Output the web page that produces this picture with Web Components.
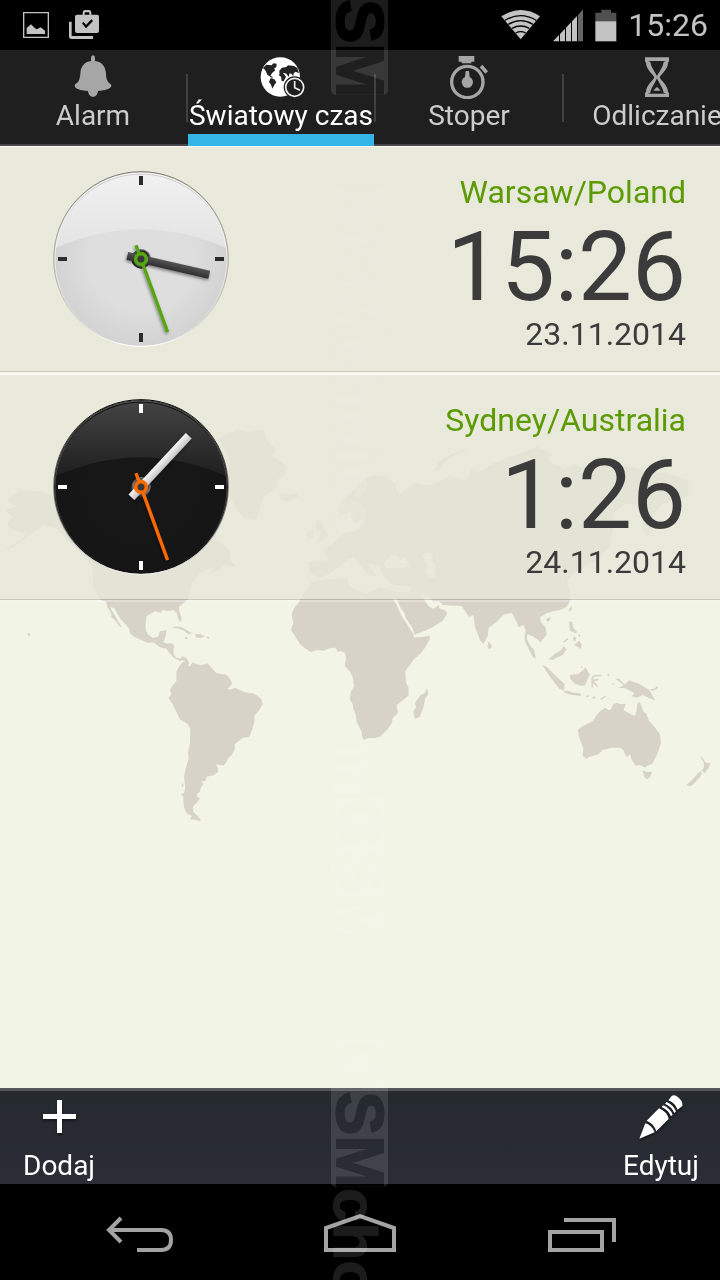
<!DOCTYPE html>
<html lang="pl">
<head>
<meta charset="utf-8">
<meta name="viewport" content="width=device-width, initial-scale=1">
<title>Światowy czas</title>
<style>
  html, body { margin: 0; background: #000; }
  body { font-family: Roboto, "Noto Sans", sans-serif; overflow-x: hidden; }
</style>
</head>
<body>
<world-clock-app></world-clock-app>

<script>
const define = (name, html) => {
  const template = document.createElement('template');
  template.innerHTML = html;
  customElements.define(name, class extends HTMLElement {
    constructor() {
      super();
      this.attachShadow({ mode: 'open' }).append(template.content.cloneNode(true));
    }
  });
};

/* System status bar */
define('status-bar', `
<style>
  :host { display: flex; align-items: center; justify-content: space-between; height: 50px; padding: 0 12px 0 23px; background: #000; color: #c3c3c3; box-sizing: border-box; }
  div { display: flex; align-items: center; }
  .left { gap: 20px; }
  .right { gap: 11px; }
  svg { display: block; fill: #c3c3c3; }
  time { font-size: 32px; line-height: 50px; }
</style>
<div class="left">
  <svg width="26" height="26" viewBox="69 36 78 78" aria-hidden="true"><path fill-rule="evenodd" d="M69 36h78v78H69zM73 40v70h70V40z"/><path d="M80 102V84l13-11 12 12 5 3 12-6 13 10v10z"/></svg>
  <svg width="30" height="30" viewBox="207 33 90 90" aria-hidden="true"><path fill-rule="evenodd" d="M231 47h17v-5q0-9 8-9h10q8 0 8 9v5h17q6 0 6 6v43q0 6-6 6h-60q-6 0-6-6V53q0-6 6-6zM254 47h14v-5q0-2-2-2h-10q-2 0-2 2zM246 73l12 15 21-22-5-5-16 17-7-9z"/><path d="M207 68h8v43h64v9h-64q-8 0-8-8z"/></svg>
</div>
<div class="right">
  <svg width="40" height="32" viewBox="420 26 120 96" aria-hidden="true"><path d="M421 48Q479 10 537 48L479 117z"/><g fill="none" stroke="#000" stroke-width="4"><path d="M432 60Q479 32 526 60M442 72Q479 50 516 72M453 84Q479 70 505 84M464 98Q479 90 494 98"/></g></svg>
  <svg width="32" height="34" viewBox="579 20 96 102" aria-hidden="true"><path d="M582 120l18-19v19zM603 98l15-16v38h-15zM621 79l15-16v57h-15zM639 60l15-16v76h-15z"/><path fill="#666" d="M657 41l15-17v96h-15z"/></svg>
  <svg width="22" height="34" viewBox="704 20 66 102" aria-hidden="true"><path fill="#505050" d="M705 34h18v-9h29v9h16v28h-63z"/><path d="M705 60h63v60h-63z"/></svg>
  <time>15:26</time>
</div>`);

/* One tab; the icon goes in the "icon" slot, the label in the default slot */
define('app-tab', `
<style>
  :host { display: block; flex: 0 0 188px; position: relative; color: #ccc; }
  button { display: flex; flex-direction: column; align-items: center; width: 186px; height: 96px; margin: 0; padding: 5px 0 0; border: 0; background: none; color: inherit; font: 28px/34px Roboto, "Noto Sans", sans-serif; white-space: nowrap; }
  .icon { display: flex; height: 44px; }
  :host::after { content: ""; position: absolute; right: 0; top: 24px; width: 2px; height: 48px; background: #404040; }
  :host(:last-child)::after { display: none; }
  :host([selected]) { color: #fff; }
  :host([selected])::before { content: ""; position: absolute; left: 0; right: 2px; bottom: 0; height: 12px; background: #33b5e5; }
</style>
<button type="button"><span class="icon"><slot name="icon"></slot></span><span><slot></slot></span></button>`);

define('tab-bar', `
<style>
  :host { display: block; height: 96px; background: linear-gradient(#48464b, #48464b) bottom / 100% 2px no-repeat, #1f1f1f; overflow: hidden; }
  nav { display: flex; }
  svg { display: block; fill: #a6a6a6; }
</style>
<nav aria-label="Widoki">
  <app-tab>
    <svg slot="icon" width="38" height="44" viewBox="222 165 114 132" aria-hidden="true"><path d="M273 183v-9q0-8 6-8t6 8v9c21 3 32 16 33 38 1 22 7 26 13 30q3 3 3 7c-2 9-18 13-40 15-2 23-28 23-30 0-24-2-38-6-40-15q0-4 3-7c7-4 12-8 14-30 1-22 12-35 32-38z"/></svg>Alarm</app-tab>
  <app-tab selected>
    <svg slot="icon" width="48" height="44" viewBox="21 15 144 132" aria-hidden="true">
      <circle cx="91" cy="81" r="59" fill="#fff"/>
      <g fill="#222"><path d="M39 54l10-10 16 2 5-6 10 1-1 10-7 5 4 5-9 7-6 9 9 5-5 1-13-9-6-13z"/><path d="M62 84l11 4 6 9-6 8-6 11-4-12-6-8z"/><path d="M88 62l8-9 13-2 5-5 18 2 10 6 5 16-10-5-6 5-1 9-6-8-5-1-3 11-7-10-8-3-3 9-10-7z"/><path d="M88 71l14 1 6 8-7 14-6-1-2-13-6-4z"/></g>
      <circle cx="134" cy="112" r="33" fill="#1f1f1f"/><circle cx="134" cy="112" r="27" fill="none" stroke="#eee" stroke-width="5"/><path d="M134 93v20l16 8" fill="none" stroke="#eee" stroke-width="5"/>
    </svg>Światowy czas</app-tab>
  <app-tab>
    <svg slot="icon" width="42" height="44" viewBox="262 165 126 132" aria-hidden="true"><path d="M294 168h47v17h-9v5h-29v-5h-9z"/><circle cx="320" cy="246" r="47" fill="none" stroke="#a6a6a6" stroke-width="10"/><path d="M315 213h10l2 18a17 17 0 1 1-14 0z"/><path d="M365 194l17 20-8 7-17-19z"/></svg>Stoper</app-tab>
  <app-tab>
    <svg slot="icon" width="26" height="44" viewBox="852 166 78 132" aria-hidden="true"><path fill-rule="evenodd" d="M855 173h72v12l-3 4c0 22-25 37-25 44s25 23 25 44l3 3v12h-72v-12l3-3c0-21 25-37 25-44s-25-22-25-44l-3-4zM866 184c3 27 25 37 25 49s-22 24-25 49h50c-3-25-25-37-25-49s22-22 25-49z"/><path fill="none" stroke="#a6a6a6" stroke-width="7" d="M867 186c3 26 20 35 20 47s-17 24-20 47M915 186c-3 26-20 35-20 47s17 24 20 47"/><path d="M881 271q4-1 6-6 4-5 8 0 2 5 6 6v2h-20z"/></svg>Odliczanie</app-tab>
</nav>`);

/* World map behind the list */
define('world-map', `
<style>
  :host { display: block; }
  svg { display: block; width: 100%; height: auto; fill: #d8d3c8; }
</style>
<svg viewBox="0 0 2160 1320" aria-hidden="true">
  <path d="M60 270L130 275 180 300 250 240 380 200 500 160 640 380 650 420 690 450 690 480 710 500 670 495 660 510 625 525 640 500 600 520 570 560 565 598 537 620 538 635 545 655 543 667 535 657 530 638 520 630 503 634 488 629 484 638 465 634 440 648 437 668 437 690 445 705 458 713 474 710 480 694 500 691 497 708 490 727 503 731 515 730 523 738 520 753 522 765 530 773 540 777 547 769 560 775 568 790 563 799 555 783 545 780 541 784 520 772 505 755 500 746 480 742 460 727 442 728 405 712 390 700 388 687 376 672 362 658 350 638 344 626 332 620 334 630 346 648 357 668 366 682 358 679 347 663 334 651 334 640 322 622 318 606 300 598 280 565 278 500 250 470 170 385 130 375 90 405 40 440 5 454 60 420 80 400 35 390 20 370 40 350 15 330 50 318 20 300z"/>
  <path d="M655 115L710 90 740 96 790 88 800 120 830 150 815 165 860 200 850 230 830 240 835 260 790 290 780 320 770 362 735 355 710 330 690 290 680 240 690 180zM835 280l35 5 20-7 4 14-34 13-20-7z"/>
  <path d="M540 795L548 787 558 784 563 797 569 799 578 787 590 793 605 795 622 790 632 800 650 820 680 825 690 837 697 852 683 866 690 869 705 863 718 869 735 877 758 880 770 886 784 896 788 912 778 930 763 947 764 963 758 985 748 1010 730 1013 718 1021 704 1033 704 1050 693 1067 684 1075 679 1087 670 1097 648 1093 655 1106 653 1117 642 1125 620 1130 616 1144 603 1143 610 1153 602 1163 601 1174 590 1184 592 1191 600 1195 592 1206 579 1220 580 1235 590 1245 602 1258 601 1263 585 1259 570 1258 576 1247 561 1241 552 1222 549 1187 542 1185 552 1178 556 1163 552 1132 557 1105 566 1075 564 1058 570 1030 571 985 562 972 540 958 529 935 518 912 505 893 514 883 510 869 519 855 529 844 529 815z"/>
  <path d="M516 685L528 679 545 682 560 690 577 700 565 703 550 691 532 685zM586 702l16 1 12 7-14 4-12-2zM555 711l8 1 1 5-8-1zM621 710l8 1-2 6-6-2zM82 699l6 0 4 6-6 5zM546 1150l5 3-2 9-4-4z"/>
  <path d="M900 598L915 575 935 545 960 540 1040 535 1050 560 1100 580 1140 562 1190 575 1225 578 1222 598 1180 598 1190 615 1205 648 1218 668 1240 702 1243 713 1290 707 1289 718 1275 743 1262 760 1240 780 1228 797 1216 813 1218 848 1225 860 1226 886 1210 900 1190 915 1194 940 1178 953 1176 969 1162 988 1140 1010 1125 1015 1105 1014 1090 1020 1086 1007 1085 995 1070 965 1067 942 1060 927 1058 912 1049 898 1053 875 1062 858 1058 832 1050 815 1034 797 1038 775 1035 758 1022 753 1013 755 1006 743 990 744 970 752 948 750 933 757 915 745 900 733 891 718 873 690 880 670 875 642 883 623 898 606z"/>
  <path d="M1281 864L1285 882 1276 895 1270 925 1258 952 1245 956 1240 935 1248 922 1245 908 1262 885 1274 880z"/>
  <path d="M1182 580L1262 580 1274 602 1288 620 1300 626 1310 620 1315 614 1318 625 1335 631 1342 640 1328 662 1300 680 1280 690 1243 704 1238 685 1218 655 1213 638 1203 626z"/>
  <path fill-rule="evenodd" d="M930 520L925 485 985 480 970 450 1000 430 1030 400 1075 390 1090 360 1060 370 1050 340 1015 345 1010 325 1035 298 1060 270 1090 240 1120 225 1160 230 1190 255 1188 272 1200 285 1225 262 1250 250 1285 256 1320 245 1345 228 1400 240 1415 205 1440 215 1480 190 1560 160 1610 140 1660 160 1640 180 1690 205 1720 195 1760 202 1800 190 1900 200 1940 215 2000 220 2065 240 2065 290 2020 300 1985 315 1960 340 1955 385 1940 410 1925 380 1930 320 1880 310 1840 340 1840 380 1830 440 1790 480 1735 510 1700 540 1710 575 1713 598 1700 620 1680 630 1655 635 1640 640 1620 652 1622 665 1637 682 1640 705 1632 713 1620 728 1615 720 1600 710 1583 702 1580 717 1590 735 1602 750 1608 776 1598 770 1580 735 1573 720 1577 690 1570 675 1555 682 1550 665 1535 638 1510 645 1490 665 1465 685 1464 706 1450 733 1440 720 1425 680 1420 645 1407 650 1385 618 1330 615 1315 603 1300 605 1288 590 1225 580 1240 560 1180 555 1150 530 1140 500 1100 490 1130 530 1100 520 1060 470 1030 490 990 520 960 535zM1150 490l25-25 20 5 5 10 15-8 15 28-70 5zM1265 465l20-8 15 3-5 20 12 15-3 35-15 5-12-20 5-20z"/>
  <path d="M955 355l15 25 15 30-35 20 15-30-20-20zM920 395l20-5 0 22-20 3zM1305 210q5-35 90-62l2 5q-65 20-78 60z"/>
  <path d="M1466 724l8 10 2 8-8 6-6-8zM1626 795l14 5 30 30 24 22-2 20-14-6-28-36zM1691 872l15 1 14 5 20 2 4 8-25-2-25-7zM1709 825l26-3 12-10 10-10 12 22-14 32-12 1-18-6-14-14zM1645 778l18-15 20-12 8-12 9 8-12 18-18 8-12 7zM1707 665l10 0 2 18 12 12-3 5-18-8zM1722 735l16-13 7 12-2 13zM1707 627l7-10 2 10-7 10zM1638 656l14-5-2 10-8 5zM1722 708l7 6-2 10-8-3zM1733 702l8 4-3 8zM1742 799l6 1-4 6zM1702 714l-13 12 3 3 13-11z"/>
  <path d="M1846 836l12 0 10 12 8 5 10-12 30 10 32 18 8 15 10 18-38-17-16 8-17-4 8-10-28-14-18-2 14-8zM1759 887l8-1 0 4-8 1zM1777 891l8-2 2 7-8 0zM1800 896l16-9 2 3-14 9zM1820 823l8 0-2 7zM1834 852l8-2-1 5z"/>
  <path fill="none" stroke="#d8d3c8" stroke-width="5" d="M1805 827q-30-3-28 10l0 25M1777 842l18-4M1780 845l12 14M1952 870q15 0 20-10"/>
  <path d="M1733 990L1745 980 1780 963 1790 945 1805 930 1815 923 1825 930 1833 928 1840 912 1850 909 1865 913 1878 911 1870 930 1890 942 1905 948 1910 930 1912 910 1920 907 1930 935 1938 940 1947 962 1963 980 1980 1003 1983 1030 1972 1062 1957 1091 1940 1098 1935 1103 1920 1095 1907 1097 1895 1080 1890 1062 1880 1072 1870 1050 1860 1043 1835 1043 1808 1050 1795 1063 1770 1070 1758 1076 1748 1068 1750 1045 1738 1015z"/>
  <path d="M1927 1111l14 5 15-1-4 14-10 9-8-5zM2098 1066l14 13 3 8 10 3 7 0-7 15-11 14-9-6 7-12-1-14zM2100 1114l6 5-6 12-22 23-8 5-12-3 18-16z"/>
</svg>`);

/* Analogue clock face: the hour-hand angle and the tone come in as attributes */
const faceStyle = {
  light: { mid: '#dedede', low: '#d2d2d2', glossTop: '#f1f1f1', glossLow: '#e3e3e3', mark: '#2b2b2b', hand: '#555', hand2: '#2e2e2e', accent: '#55a512', hub: '#2a2a2a', rim: '#77776e', rim2: '#fff', inner: 0.9 },
  dark: { mid: '#171717', low: '#151515', glossTop: '#434343', glossLow: '#1f1f1f', mark: '#fff', hand: '#f5f5f5', hand2: '#c4c4c4', accent: '#ff6a00', hub: '#555', rim: '#000', rim2: '#f4f4f4', inner: 0.3 }
};
customElements.define('clock-face', class extends HTMLElement {
  connectedCallback() {
    const c = faceStyle[this.getAttribute('tone')];
    const hour = this.getAttribute('hour-angle');
    const root = this.shadowRoot || this.attachShadow({ mode: 'open' });
    root.innerHTML = `
<style>:host { display: block; width: 200px; height: 200px; } svg { display: block; width: 100%; height: 100%; }</style>
<svg viewBox="0 0 600 600" role="img" aria-label="Zegar">
  <defs>
    <radialGradient id="body"><stop offset="0.6" stop-color="${c.mid}"/><stop offset="1" stop-color="${c.low}"/></radialGradient>
    <linearGradient id="gloss" x1="0" y1="0" x2="0" y2="1"><stop offset="0" stop-color="${c.glossTop}"/><stop offset="1" stop-color="${c.glossLow}"/></linearGradient>
    <linearGradient id="rim" x1="0" y1="0" x2="0" y2="1"><stop offset="0" stop-color="${c.rim}"/><stop offset="0.5" stop-color="${c.rim}" stop-opacity="0.5"/><stop offset="1" stop-color="${c.rim2}"/></linearGradient>
    <linearGradient id="rimInner" x1="0" y1="0" x2="0" y2="1"><stop offset="0" stop-color="#fff"/><stop offset="0.6" stop-color="#fff" stop-opacity="0.5"/><stop offset="1" stop-color="#fff" stop-opacity="0"/></linearGradient>
    <linearGradient id="hand" x1="0" x2="1" y1="0" y2="0"><stop offset="0" stop-color="${c.hand}"/><stop offset="1" stop-color="${c.hand2}"/></linearGradient>
    <filter id="shadow" x="-50%" y="-50%" width="200%" height="200%"><feDropShadow dx="-2" dy="5" stdDeviation="4" flood-opacity="0.45"/></filter>
  </defs>
  <circle cx="303" cy="297" r="261" fill="url(#body)"/>
  <path d="M46 265A260 260 0 0 1 560 265Q430 208 303 208T46 265z" fill="url(#gloss)"/>
  <circle cx="303" cy="297" r="258" fill="none" stroke="url(#rimInner)" stroke-width="3" opacity="${c.inner}"/>
  <circle cx="303" cy="297" r="262" fill="none" stroke="url(#rim)" stroke-width="3"/>
  <path fill="${c.mark}" d="M297 48h12v27h-12zM297 519h12v27h-12zM54 291h27v12H54zM525 291h27v12h-27z"/>
  <circle cx="303" cy="297" r="29" fill="${c.hub}"/><circle cx="305" cy="294" r="25" fill="none" stroke="#888" stroke-width="4" opacity="0.7"/>
  <g filter="url(#shadow)"><rect x="291" y="87" width="24" height="252" fill="url(#hand)" transform="rotate(${hour} 303 297)"/></g>
  <g filter="url(#shadow)"><path d="M298 253h10v277h-10z" fill="${c.accent}" transform="rotate(-20 303 297)"/></g>
  <circle cx="303" cy="297" r="16" fill="#383838" stroke="${c.accent}" stroke-width="11"/>
</svg>`;
  }
});

/* List row for one city */
define('city-row', `
<style>
  :host { display: flex; justify-content: space-between; box-sizing: border-box; height: 228px; padding: 13px 34px 0 40px; border-top: 1px solid #fdfdfa;
    background: linear-gradient(rgba(230,231,217,.82) 224px, rgba(150,148,135,.45) 224px 225px, rgba(255,255,255,.25) 225px); }
  .text { display: flex; flex-direction: column; align-items: flex-end; padding-top: 6px; color: #3b3b3b; font-size: 32px; }
  .city { line-height: 52px; color: #5c9a02; }
  .time { font-size: 96px; line-height: 98px; }
  .date { line-height: 36px; }
</style>
<slot name="face"></slot>
<div class="text">
  <span class="city"><slot></slot></span>
  <span class="time"><slot name="time"></slot></span>
  <span class="date"><slot name="date"></slot></span>
</div>`);

define('city-list', `
<style>
  :host { display: grid; align-content: start; background: #f2f4e6; overflow: hidden; }
  world-map, section { grid-area: 1 / 1; }
  world-map { margin-top: 254px; }
  section { z-index: 1; }
</style>
<world-map></world-map>
<section>
  <city-row><clock-face slot="face" tone="light" hour-angle="103"></clock-face>Warsaw/Poland<time slot="time">15:26</time><time slot="date">23.11.2014</time></city-row>
  <city-row><clock-face slot="face" tone="dark" hour-angle="43"></clock-face>Sydney/Australia<time slot="time">1:26</time><time slot="date">24.11.2014</time></city-row>
</section>`);

/* Bottom actions */
define('action-bar', `
<style>
  :host { display: flex; justify-content: space-between; box-sizing: border-box; height: 96px; padding: 4px 21px 0 23px; border-top: 3px solid #53575c; background: linear-gradient(#252a2f, #2a2d35); }
  button { display: flex; flex-direction: column; align-items: center; gap: 10px; margin: 0; padding: 0; border: 0; background: none; color: #fff; font: 28px/34px Roboto, "Noto Sans", sans-serif; }
  svg { display: block; fill: #fff; filter: drop-shadow(0 2px 1px rgba(0,0,0,.5)); }
</style>
<button type="button"><svg width="44" height="44" viewBox="0 0 44 44" aria-hidden="true"><path d="M20 5h5v14h14v5H25v14h-5V24H6v-5h14z"/></svg>Dodaj</button>
<button type="button"><svg width="44" height="44" viewBox="836 45 132 132" aria-hidden="true"><path d="M837 176l18-46q20 6 28 27zM859 122l37-37q24 10 29 32l-37 37q-8-24-29-32zM904 81l5-5q21 10 28 28l-5 5q-8-19-28-28zM914 71l5-5q21 10 28 28l-5 5q-8-19-28-28zM924 61l10-13q8-6 21 5t11 25l-14 11q-8-20-28-28z"/></svg>Edytuj</button>`);

/* System navigation keys */
define('system-nav', `
<style>
  :host { display: grid; grid-template-columns: repeat(3, 1fr); height: 96px; padding: 0 30px; background: #000; }
  button { display: flex; align-items: center; justify-content: center; margin: 0; padding: 4px 0 0; border: 0; background: none; }
  svg { display: block; fill: none; stroke: #a3a3a3; stroke-width: 4; }
</style>
<button type="button" aria-label="Wstecz"><svg width="72" height="44" viewBox="0 0 72 44"><path d="M4 18h53q10 0 10 10t-10 10H33M17 6L5 18l12 12"/></svg></button>
<button type="button" aria-label="Ekran główny"><svg width="72" height="44" viewBox="0 0 72 44"><path d="M2 38V16L36 4l34 12v22z"/></svg></button>
<button type="button" aria-label="Ostatnie"><svg width="72" height="44" viewBox="0 0 72 44"><path d="M6 20h52v18H6zM20 8h50v22"/></svg></button>`);

/* Vertical site mark laid over the whole screen, fainter over the light list */
define('site-mark', `
<style>
  :host { position: absolute; top: 0; bottom: 0; left: 50%; margin-left: -29px; width: 57px; overflow: hidden; pointer-events: none; opacity: .11; mix-blend-mode: screen; writing-mode: vertical-rl; font: bold 62px/57px "Liberation Sans", sans-serif; white-space: nowrap; z-index: 5; color: #fff;
    mask-image: linear-gradient(#000 146px, rgba(0,0,0,.55) 146px calc(100% - 192px), #000 calc(100% - 192px)); }
  b { position: absolute; right: 0; height: 147px; width: 57px; border-radius: 5px; background: #fff; color: #000; font-size: 66px; text-align: center; -webkit-text-stroke: 2px #000; }
  span { position: absolute; right: 4px; -webkit-text-stroke: 1px #fff; }
</style>
<b style="top:-52px">GSM</b><b style="top:188px">GSM</b><span style="top:337px">choice</span>
<span style="top:742px">m</span><b style="top:798px">GSM</b><b style="top:1040px">GSM</b><span style="top:1188px">cho</span>`);

define('world-clock-app', `
<style>
  :host { display: flex; flex-direction: column; position: relative; min-height: 100vh; isolation: isolate; }
  city-list { flex: 1; }
</style>
<status-bar></status-bar>
<tab-bar></tab-bar>
<city-list></city-list>
<action-bar></action-bar>
<system-nav></system-nav>
<site-mark></site-mark>`);
</script>
</body>
</html>
